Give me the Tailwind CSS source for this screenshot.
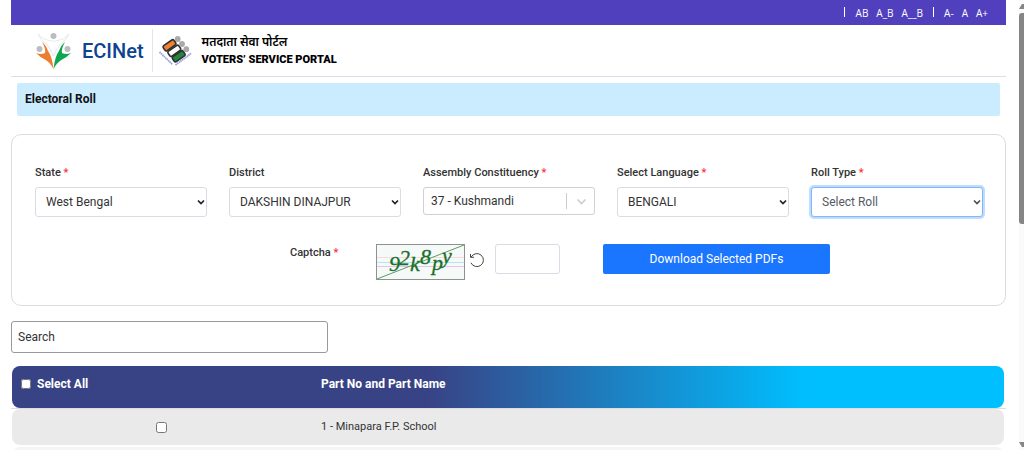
<!DOCTYPE html>
<html lang="en">
<head>
    <meta charset="UTF-8">
    <meta name="viewport" content="width=device-width, initial-scale=1.0">
    <title>Electoral Roll - Voters' Service Portal</title>
    <script src="https://cdn.jsdelivr.net/npm/@tailwindcss/browser@4"></script>
</head>
<body class="flex h-screen overflow-hidden bg-white font-['Roboto','Noto_Sans',sans-serif] text-[#333]">
    <div class="min-w-0 flex-1 pl-[11px] pr-[13px]">
        <!-- Accessibility bar -->
        <nav class="flex h-[25px] items-center justify-end gap-2 bg-[#5140bd] pr-[18px] pt-px font-['Open_Sans',sans-serif] text-[10px] text-white">
            <span class="mb-[3px] h-[10px] w-px bg-white"></span>
            <a href="#" class="ml-[3px]">AB</a>
            <a href="#">A_B</a>
            <a href="#">A__B</a>
            <span class="mx-[2px] mb-[3px] h-[10px] w-px bg-white"></span>
            <a href="#">A-</a>
            <a href="#">A</a>
            <a href="#">A+</a>
        </nav>

        <!-- Header -->
        <header class="flex h-[52px] items-center border-b border-[#dddde8] pl-6">
            <a href="#" class="flex items-center gap-[9px]">
                <svg class="h-[38px] w-[38px]" viewBox="0 0 38 38" aria-hidden="true">
                    <path d="M3 2 Q8 8 14 8.500 Q18.500 10 23 8.500 Q29 8 34 2 Q31 9 25 12.500 Q22 16 18.500 24 Q15 16 12 12.500 Q6 9 3 2Z" fill="#fff" stroke="#dcdee0" stroke-width="0.7"/>
                    <circle cx="18.500" cy="4" r="3" fill="#bcbdc0"/>
                    <circle cx="4.500" cy="17" r="3" fill="#bcbdc0"/>
                    <circle cx="32.500" cy="17" r="3" fill="#bcbdc0"/>
                    <path d="M7 10 Q11 13 13 19 Q17 24 18.500 37 Q15 30 9 27 Q5 25 1 21 Q6 23 10 21 Q11 17 7 10Z" fill="#ed7d31"/>
                    <path d="M30 10 Q26 13 24 19 Q20 24 18.500 37 Q22 30 28 27 Q32 25 36 21 Q31 23 27 21 Q26 17 30 10Z" fill="#0fa650"/>
                </svg>
                <span class="text-[20px] font-medium leading-6 text-[#0d4391]">ECINet</span>
            </a>
            <span class="ml-2 h-[43px] w-px bg-[#e4e4ea]"></span>
            <svg class="ml-[5px] h-[32px] w-[34px]" viewBox="0 0 34 32" aria-hidden="true">
                <g fill="#aaa">
                    <circle cx="19.700" cy="4" r="2.900"/>
                    <circle cx="24" cy="9" r="2.900"/>
                    <circle cx="28.300" cy="14.200" r="2.900"/>
                </g>
                <g stroke="#303030" stroke-width="1.600">
                    <rect x="5" y="7.300" width="13" height="6" rx="1.500" fill="#f08132" transform="rotate(-35 11.500 10.300)"/>
                    <rect x="9.800" y="12.800" width="13" height="6" rx="1.500" fill="#fff" transform="rotate(-35 16.300 15.800)"/>
                    <rect x="14.200" y="18.300" width="13" height="6" rx="1.500" fill="#21883b" transform="rotate(-35 20.700 21.300)"/>
                </g>
                <g stroke="#98a1dc" stroke-width="1.800" stroke-dasharray="1.500 0.500">
                    <path d="M1.500 17 L14.500 29.500"/>
                    <path d="M17.500 30 L33 18.500"/>
                </g>
            </svg>
            <div class="ml-[10px] leading-[17px] text-black">
                <p lang="hi" class="text-xs font-semibold leading-[17px]">मतदाता सेवा पोर्टल</p>
                <p class="text-[11px] font-black leading-[17px]">VOTERS’ SERVICE PORTAL</p>
            </div>
        </header>

        <main>
            <h1 class="mx-[6px] mt-[6px] rounded-[2px] bg-[#cbebff] px-2 py-2 text-xs font-bold leading-[17px] text-[#111]">Electoral Roll</h1>

            <!-- Filters -->
            <form class="mt-[18px] h-[172px] rounded-[10px] border border-[#dcdcdf] pl-[23px] pr-[22px] pt-[30px]">
                <div class="grid grid-cols-5 gap-[22px]">
                    <div>
                        <label for="state" class="block text-[11px] font-medium leading-4">State <span class="text-red-500">*</span></label>
                        <div class="relative mt-[6px]">
                            <select id="state" class="h-[30px] w-full appearance-none rounded-[3px] border border-[#d9dce4] bg-white px-[10px] text-xs">
                                <option>West Bengal</option>
                            </select>
                            <svg class="pointer-events-none absolute right-[2px] top-[11px] h-2 w-2" viewBox="0 0 8 8" fill="none" stroke="#222" stroke-width="1.700"><path d="M1 2.500 L4 5.500 L7 2.500"/></svg>
                        </div>
                    </div>
                    <div>
                        <label for="district" class="block text-[11px] font-medium leading-4">District</label>
                        <div class="relative mt-[6px]">
                            <select id="district" class="h-[30px] w-full appearance-none rounded-[3px] border border-[#d9dce4] bg-white px-[10px] text-xs">
                                <option>DAKSHIN DINAJPUR</option>
                            </select>
                            <svg class="pointer-events-none absolute right-[2px] top-[11px] h-2 w-2" viewBox="0 0 8 8" fill="none" stroke="#222" stroke-width="1.700"><path d="M1 2.500 L4 5.500 L7 2.500"/></svg>
                        </div>
                    </div>
                    <div>
                        <label for="constituency" class="block text-[11px] font-medium leading-4">Assembly Constituency <span class="text-red-500">*</span></label>
                        <div class="relative mt-[6px]">
                            <select id="constituency" class="h-[28px] w-full appearance-none rounded-[3px] border border-[#d0d0d0] bg-white px-[7px] text-xs">
                                <option>37 - Kushmandi</option>
                            </select>
                            <span class="pointer-events-none absolute inset-y-[6px] right-0 flex w-[29px] items-center justify-center border-l border-[#ccc]">
                                <svg class="h-[9px] w-[11px]" viewBox="0 0 11 9" fill="none" stroke="#ccc" stroke-width="1.600"><path d="M1.500 2.500 L5.500 6.500 L9.500 2.500"/></svg>
                            </span>
                        </div>
                    </div>
                    <div>
                        <label for="language" class="block text-[11px] font-medium leading-4">Select Language <span class="text-red-500">*</span></label>
                        <div class="relative mt-[6px]">
                            <select id="language" class="h-[30px] w-full appearance-none rounded-[3px] border border-[#d9dce4] bg-white px-[10px] text-xs">
                                <option>BENGALI</option>
                            </select>
                            <svg class="pointer-events-none absolute right-[2px] top-[11px] h-2 w-2" viewBox="0 0 8 8" fill="none" stroke="#222" stroke-width="1.700"><path d="M1 2.500 L4 5.500 L7 2.500"/></svg>
                        </div>
                    </div>
                    <div>
                        <label for="roll-type" class="block text-[11px] font-medium leading-4">Roll Type <span class="text-red-500">*</span></label>
                        <div class="relative mt-[6px]">
                            <select id="roll-type" class="h-[30px] w-full appearance-none rounded-[3px] border border-[#80b8f8] bg-white px-[10px] text-xs text-[#555b66] ring-2 ring-[#bfdcff]">
                                <option>Select Roll</option>
                            </select>
                            <svg class="pointer-events-none absolute right-[2px] top-[11px] h-2 w-2" viewBox="0 0 8 8" fill="none" stroke="#495057" stroke-width="1.700"><path d="M1 2.500 L4 5.500 L7 2.500"/></svg>
                        </div>
                    </div>
                </div>

                <div class="mt-[27px] flex items-start pl-[255px]">
                    <label for="captcha" class="w-[86px] text-[11px] font-medium leading-[18px]">Captcha <span class="text-red-500">*</span></label>
                    <svg class="h-[36px] w-[89px]" viewBox="0 0 89 36" role="img" aria-label="Captcha image">
                        <rect x="0.500" y="0.500" width="88" height="35" fill="#f5f9f7" stroke="#8a948c"/>
                        <path d="M1 13.500H88" stroke="#f9d9dc"/>
                        <path d="M1 18.500H88" stroke="#b5e3f7"/>
                        <path d="M1 22.500H88" stroke="#efbfeb"/>
                        <path d="M1 35 L88 1" stroke="#5c9c65"/>
                        <g fill="#19702a" stroke="#19702a" stroke-width="0.300" font-family="Liberation Serif, serif" font-style="italic" font-size="22">
                            <text x="13" y="27">9</text>
                            <text x="23" y="21">2</text>
                            <text x="34" y="27">k</text>
                            <text x="44" y="20">8</text>
                            <text x="56" y="26">p</text>
                            <text x="66" y="19">y</text>
                        </g>
                    </svg>
                    <button type="button" aria-label="Refresh captcha" class="ml-[4px] mt-[8px]">
                        <svg class="h-4 w-4" viewBox="0 0 16 16" fill="none" stroke="#444" stroke-width="1"><path d="M2.200 5 A6.500 6.500 0 1 1 2 10.800 M1.500 2 V5.300 H5"/></svg>
                    </button>
                    <input id="captcha" type="text" class="ml-[10px] h-[30px] w-[65px] rounded-[3px] border border-[#d9dce4] px-2 text-xs">
                    <button type="button" class="ml-[43px] h-[30px] w-[227px] rounded-[2px] bg-[#1a75ff] text-xs text-white">Download Selected PDFs</button>
                </div>
            </form>

            <input type="search" aria-label="Search" placeholder="Search" class="mt-[15px] block h-[32px] w-[317px] rounded-[3px] border border-[#999] px-[6px] text-xs placeholder:text-[#333]">

            <!-- Parts list -->
            <table class="mt-[13px] block text-xs">
                <thead class="block border-b border-[#dcdde3]">
                    <tr class="ml-px mr-[2px] flex h-[42px] rounded-lg bg-linear-to-r/srgb from-[#384385] from-42% to-[#00bfff] to-80% text-white">
                        <th class="flex w-[309px] items-start pl-[9px] pt-[9px] font-bold">
                            <label class="flex items-center gap-[6px] leading-[18px]">
                                <input type="checkbox" class="size-[10px]">
                                Select All
                            </label>
                        </th>
                        <th class="pt-[9px] text-left font-bold leading-[18px]">Part No and Part Name</th>
                    </tr>
                </thead>
                <tbody class="block">
                    <tr class="ml-px mr-[2px] flex h-[36px] items-center rounded-lg bg-[#eaeaea]">
                        <td class="flex w-[309px] justify-center pr-[10px]"><input type="checkbox" aria-label="Select part 1" class="size-[11px]"></td>
                        <td class="text-[11px]">1 - Minapara F.P. School</td>
                    </tr>
                    <tr class="ml-px mr-[2px] mt-[2px] flex h-[36px] items-center rounded-lg bg-[#f5f5f5]">
                        <td class="flex w-[309px] justify-center pr-[10px]"></td>
                        <td></td>
                    </tr>
                </tbody>
            </table>
        </main>
    </div>

    <!-- Scroll bar -->
    <div class="flex w-[5px] flex-col items-end overflow-hidden bg-[#fafafa]" aria-hidden="true">
        <svg class="mt-[4px] h-[5px] w-[5px]" viewBox="0 0 5 5"><path d="M0 5 L3 0 H5 V5Z" fill="#858585"/></svg>
        <div class="mt-[4px] h-[211px] w-full rounded-l-[3px] bg-[#858585]"></div>
        <svg class="mb-[3px] mt-auto h-[5px] w-[5px]" viewBox="0 0 5 5"><path d="M0 0 H5 V5 H3Z" fill="#858585"/></svg>
    </div>
</body>
</html>
